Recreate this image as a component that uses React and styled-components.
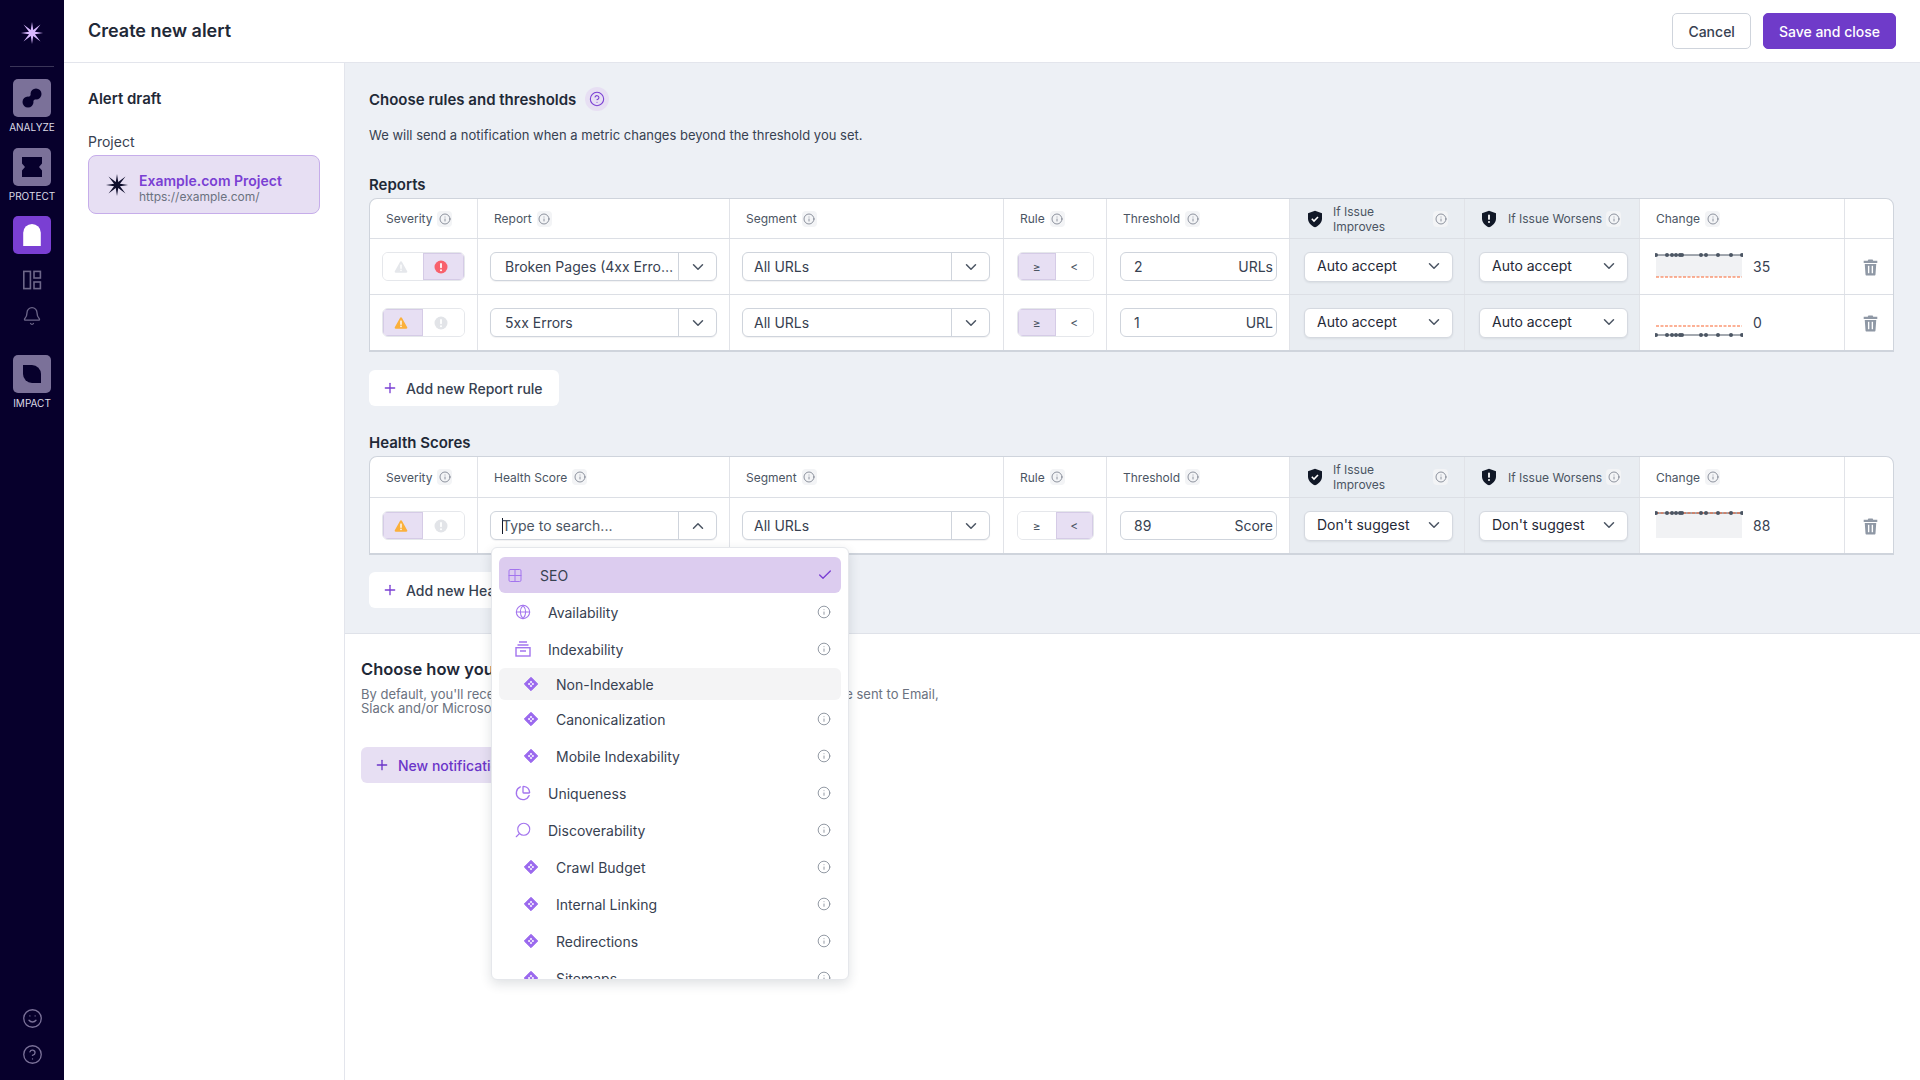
import styled, { createGlobalStyle } from "styled-components";
import {
  Bell,
  Check,
  ChevronDown,
  ChevronUp,
  CircleHelp,
  Globe,
  Grid2x2,
  Info,
  PieChart,
  Plus,
  Search,
  Smile,
} from "lucide-react";

const GlobalStyle = createGlobalStyle`
  * { box-sizing: border-box; }
  html, body { margin: 0; padding: 0; height: 100%; }
  body {
    font-family: Inter, "Liberation Sans", sans-serif;
    color: #1f2937;
    background: #ffffff;
  }
`;

const COLUMNS = "108px 252px 274px 103px 183px 175px 175px 205px 48px";

const Page = styled.div`
  display: flex;
  width: 100%;
  height: 100vh;
  overflow: hidden;
`;

const Sidebar = styled.aside`
  width: 64px;
  flex-shrink: 0;
  background: #07002c;
  display: flex;
  flex-direction: column;
  align-items: center;
`;

const SideLogo = styled.div`
  height: 67px;
  width: 44px;
  display: flex;
  align-items: center;
  justify-content: center;
  border-bottom: 1px solid #3a3558;
  padding-bottom: 1px;
`;

const SideGroup = styled.div`
  display: flex;
  flex-direction: column;
  align-items: center;
  margin-top: ${(p) => p.$top || 0}px;
`;

const SideTile = styled.div`
  width: 38px;
  height: 38px;
  border-radius: 5px;
  background: ${(p) => (p.$active ? "#7a3fd3" : "#7b7199")};
  display: flex;
  align-items: center;
  justify-content: center;
`;

const SideLabel = styled.span`
  font-size: 10px;
  line-height: 12px;
  margin-top: 4px;
  color: #dcdae6;
`;

const SideIcon = styled.div`
  height: 20px;
  display: flex;
  align-items: center;
  justify-content: center;
  color: #6d6689;
  margin-top: ${(p) => p.$top || 0}px;
`;

const SideBottom = styled.div`
  margin-top: auto;
  padding-bottom: 15px;
  display: flex;
  flex-direction: column;
  align-items: center;
  gap: 15px;
  color: #7b7199;
`;

const Content = styled.div`
  flex: 1;
  min-width: 0;
  display: flex;
  flex-direction: column;
`;

const Header = styled.header`
  height: 63px;
  flex-shrink: 0;
  border-bottom: 1px solid #e3e5ec;
  padding: 0 24px 1px;
  display: flex;
  align-items: center;
  justify-content: space-between;
`;

const PageTitle = styled.h1`
  margin: 0;
  font-size: 18px;
  font-weight: 600;
  color: #1f2937;
`;

const HeaderActions = styled.div`
  display: flex;
  gap: 12px;
  margin-top: 1px;
`;

const Button = styled.button`
  height: 36px;
  padding: 0 15px;
  font-family: inherit;
  font-size: 14px;
  font-weight: 500;
  border-radius: 5px;
  cursor: pointer;
  border: 1px solid ${(p) => (p.$primary ? "#6f3bc9" : "#cfd4dc")};
  background: ${(p) => (p.$primary ? "#6f3bc9" : "#ffffff")};
  color: ${(p) => (p.$primary ? "#ffffff" : "#374151")};
`;

const Body = styled.div`
  flex: 1;
  min-height: 0;
  display: flex;
`;

const LeftPanel = styled.div`
  width: 281px;
  flex-shrink: 0;
  border-right: 1px solid #e3e5ec;
  padding: 26px 24px 0;
`;

const PanelTitle = styled.div`
  font-size: 15px;
  font-weight: 600;
  line-height: 20px;
  color: #1f2937;
`;

const FieldLabel = styled.div`
  font-size: 14px;
  line-height: 18px;
  margin-top: 24px;
  margin-bottom: 4px;
  color: #374151;
`;

const ProjectCard = styled.div`
  height: 59px;
  width: 232px;
  border-radius: 8px;
  background: #e7dff3;
  border: 1px solid #c6adea;
  display: flex;
  align-items: center;
  gap: 10px;
  padding-left: 16px;
`;

const ProjectText = styled.div`
  padding-top: 7px;
`;

const ProjectName = styled.div`
  font-size: 14px;
  font-weight: 600;
  line-height: 16px;
  color: #7a3fd3;
`;

const ProjectUrl = styled.div`
  font-size: 12px;
  line-height: 15px;
  color: #6b7280;
`;

const Main = styled.main`
  flex: 1;
  min-width: 0;
  display: flex;
  flex-direction: column;
`;

const Rules = styled.section`
  background: #edf0f5;
  padding: 24px 26px 25px 24px;
  border-bottom: 1px solid #dfe2e9;
`;

const TitleRow = styled.div`
  display: flex;
  align-items: center;
  gap: 9px;
  height: 24px;
`;

const SectionTitle = styled.h2`
  margin: 0;
  font-size: 15px;
  font-weight: 600;
  color: #1f2937;
`;

const HelpBadge = styled.span`
  width: 24px;
  height: 24px;
  border-radius: 50%;
  background: #e7dff3;
  color: #7a3fd3;
  display: flex;
  align-items: center;
  justify-content: center;
`;

const Description = styled.p`
  margin: 14px 0 0;
  font-size: 13px;
  line-height: 20px;
  color: #374151;
`;

const GroupTitle = styled.h3`
  margin: ${(p) => p.$top}px 0 3px;
  font-size: 15px;
  font-weight: 600;
  line-height: 20px;
  color: #1f2937;
`;

const Table = styled.div`
  width: 1525px;
  background: #ffffff;
  border: 1px solid #cfd4dc;
  border-bottom-width: 2px;
  border-radius: 8px 8px 0 0;
`;

const Row = styled.div`
  display: grid;
  grid-template-columns: ${COLUMNS};
  height: ${(p) => p.$height}px;
  border-bottom: ${(p) => (p.$last ? "none" : "1px solid #dcdfe5")};
`;

const Cell = styled.div`
  display: flex;
  align-items: center;
  min-width: 0;
  padding: 0 ${(p) => (p.$right === undefined ? 12 : p.$right)}px 0 ${(p) => (p.$left === undefined ? 12 : p.$left)}px;
  border-right: ${(p) => (p.$end ? "none" : "1px solid #e1e3e8")};
  background: ${(p) => (p.$shade ? "#e9edf2" : "transparent")};
  gap: ${(p) => p.$gap || 0}px;
`;

const HeadLabel = styled.span`
  font-size: 12px;
  line-height: 15px;
  color: #4b5563;
  flex: ${(p) => (p.$grow ? 1 : "none")};
`;

const InfoTile = styled.span`
  width: 15px;
  height: 16px;
  margin-left: ${(p) => (p.$ml === undefined ? 5 : p.$ml)}px;
  flex-shrink: 0;
  border-radius: 4px;
  background: #f3f4f6;
  color: #6b7280;
  display: inline-flex;
  align-items: center;
  justify-content: center;
`;

const Toggle = styled.div`
  display: flex;
  width: ${(p) => p.$width}px;
  height: 29px;
  border-radius: 6px;
  border: 1px solid #e5e7eb;
  overflow: hidden;
`;

const ToggleSide = styled.div`
  flex: 1;
  display: flex;
  align-items: center;
  justify-content: center;
  padding-right: ${(p) => p.$nudge || 0}px;
  font-size: 12px;
  color: #4b5563;
  background: ${(p) => (p.$on ? "#e7dff3" : "#ffffff")};
  box-shadow: ${(p) => (p.$on ? "inset 0 0 0 1px #d5cbe6" : "none")};
`;

const ComboBox = styled.div`
  position: relative;
  display: flex;
  width: 100%;
  height: 29px;
  background: #ffffff;
  border: 1px solid #cfd4dc;
  border-radius: 6px;
  box-shadow: 0 1px 1px rgba(31, 41, 55, 0.06);
`;

const ComboText = styled.span`
  flex: 1;
  min-width: 0;
  padding-left: ${(p) => p.$pad}px;
  padding-right: 2px;
  font-size: 14px;
  line-height: 27px;
  color: ${(p) => (p.$muted ? "#4b5563" : "#374151")};
  white-space: nowrap;
  overflow: hidden;
  text-overflow: ellipsis;
`;

const Caret = styled.span`
  display: inline-block;
  width: 1px;
  height: 16px;
  margin-right: -1px;
  vertical-align: -3px;
  background: #111827;
`;

const ComboArrow = styled.span`
  width: 38px;
  flex-shrink: 0;
  border-left: 1px solid #cfd4dc;
  display: flex;
  align-items: center;
  justify-content: center;
  color: #4b5563;
`;

const ThresholdBox = styled.div`
  width: 100%;
  height: 29px;
  display: flex;
  align-items: center;
  justify-content: space-between;
  padding: 0 3px 0 13px;
  background: #ffffff;
  border: 1px solid #cfd4dc;
  border-radius: 6px;
  font-size: 14px;
  color: #374151;
`;

const ActionSelect = styled.div`
  width: 100%;
  height: 30px;
  display: flex;
  align-items: center;
  justify-content: space-between;
  padding: 0 9px 2px 12px;
  background: #ffffff;
  border: 1px solid #d5d9e0;
  border-radius: 6px;
  box-shadow: 0 1px 2px rgba(31, 41, 55, 0.08);
  font-size: 14px;
  color: #1f2937;
`;

const ChangeValue = styled.span`
  margin-left: 10px;
  font-size: 14px;
  color: #374151;
`;

const BinWrap = styled.span`
  display: flex;
  margin-top: 2px;
`;

const AddButton = styled.button`
  display: flex;
  align-items: center;
  gap: 8px;
  height: 36px;
  margin-top: ${(p) => p.$top}px;
  padding: 0 16px 0 13px;
  border: none;
  border-radius: 6px;
  background: #ffffff;
  font-family: inherit;
  font-size: 14px;
  font-weight: 500;
  color: #374151;
  white-space: nowrap;
  svg { color: #7a3fd3; flex-shrink: 0; }
`;

const Notify = styled.section`
  flex: 1;
  background: #ffffff;
  padding: 25px 16px 0;
`;

const NotifyTitle = styled.h2`
  margin: 0;
  font-size: 16.5px;
  font-weight: 600;
  line-height: 20px;
  color: #1f2937;
`;

const NotifyText = styled.p`
  margin: 8px 0 0;
  font-size: 13px;
  line-height: 14px;
  color: #6b7280;
  white-space: nowrap;
`;

const NotifyButton = styled.button`
  display: flex;
  align-items: center;
  gap: 8px;
  height: 36px;
  margin-top: 32px;
  padding: 0 14px 0 13px;
  border: none;
  border-radius: 6px;
  background: #e7dff3;
  font-family: inherit;
  font-size: 14px;
  font-weight: 500;
  color: #6b35c9;
`;

const Dropdown = styled.div`
  position: absolute;
  top: calc(100% + 8px);
  left: 0;
  z-index: 10;
  width: 358px;
  height: 433px;
  padding: 9px 7px 0;
  overflow: hidden;
  background: #ffffff;
  border: 1px solid #e5e7eb;
  border-radius: 6px;
  box-shadow: 0 4px 12px rgba(31, 41, 55, 0.14);
  display: flex;
  flex-direction: column;
  gap: 1px;
`;

const DropItem = styled.div`
  flex-shrink: 0;
  display: flex;
  align-items: center;
  height: ${(p) => (p.$hover ? 32 : 36)}px;
  padding: 0 10px 0 ${(p) => p.$pad}px;
  border-radius: 6px;
  background: ${(p) => (p.$selected ? "#dcccef" : p.$hover ? "#f4f4f5" : "transparent")};
  font-size: 14px;
  color: #374151;
`;

const DropIcon = styled.span`
  width: 16px;
  height: 16px;
  margin: 0 17px 0 1px;
  flex-shrink: 0;
  color: #a374ee;
  display: flex;
  align-items: center;
  justify-content: center;
`;

const DropLabel = styled.span`
  flex: 1;
`;

const DropInfo = styled.span`
  color: #7b8390;
  display: flex;
  margin-right: 0;
`;

const DropCheck = styled.span`
  color: #7a3fd3;
  display: flex;
  margin-right: -2px;
`;

const FlipIcon = styled.span`
  display: flex;
  transform: scaleX(-1);
`;

const starPoints = (outer, inner) => {
  const pts = [];
  for (let i = 0; i < 16; i++) {
    const r = i % 2 === 0 ? (i % 4 === 0 ? outer * 0.92 : outer) : inner;
    const a = (Math.PI * i) / 8 - Math.PI / 2;
    pts.push(`${(12 + r * Math.cos(a)).toFixed(2)},${(12 + r * Math.sin(a)).toFixed(2)}`);
  }
  return pts.join(" ");
};

const Star = ({ size, color }) => (
  <svg width={size} height={size} viewBox="0 0 24 24">
    <polygon points={starPoints(12, 3.2)} fill={color} />
  </svg>
);

const InfoMark = () => (
  <InfoTile>
    <Info size={12} strokeWidth={1.5} />
  </InfoTile>
);

const Triangle = ({ color }) => (
  <svg width="14" height="14" viewBox="0 0 14 14">
    <path d="M7 1.2c.4 0 .7.2.9.5l5.3 9.6c.4.7-.1 1.5-.9 1.5H1.7c-.8 0-1.3-.8-.9-1.5l5.3-9.6c.2-.3.5-.5.9-.5z" fill={color} />
    <rect x="6.3" y="4.6" width="1.4" height="4.2" fill="#fff" />
    <rect x="6.3" y="9.7" width="1.4" height="1.4" fill="#fff" />
  </svg>
);

const Alert = ({ color }) => (
  <svg width="14" height="14" viewBox="0 0 14 14">
    <circle cx="7" cy="7" r="6.5" fill={color} />
    <rect x="6.1" y="3" width="1.8" height="5.2" rx="0.9" fill="#fff" />
    <circle cx="7" cy="10.2" r="1" fill="#fff" />
  </svg>
);

const ShieldCheck = () => (
  <svg width="16" height="18" viewBox="0 0 16 18">
    <path d="M8 .8l7 2.4v5.2c0 4-2.9 7.2-7 8.8-4.1-1.6-7-4.8-7-8.8V3.2z" fill="#111827" />
    <path d="M4.8 8.8l2.2 2.2 4-4" fill="none" stroke="#fff" strokeWidth="1.6" />
  </svg>
);

const ShieldAlert = () => (
  <svg width="16" height="18" viewBox="0 0 16 18">
    <path d="M8 .8l7 2.4v5.2c0 4-2.9 7.2-7 8.8-4.1-1.6-7-4.8-7-8.8V3.2z" fill="#111827" />
    <rect x="7.1" y="4.6" width="1.8" height="5.2" rx="0.9" fill="#fff" />
    <circle cx="8" cy="12" r="1" fill="#fff" />
  </svg>
);

const Bin = () => (
  <svg width="15" height="17" viewBox="0 0 14 16">
    <path d="M5 0.5h4l.6 1.2H13.4v2H.6v-2h3.8z" fill="#8f98a5" />
    <path d="M1.6 4.6h10.8l-.7 10c0 .5-.4.9-.9.9H3.2c-.5 0-.9-.4-.9-.9z" fill="#8f98a5" />
    <rect x="4.6" y="6.4" width="1.3" height="7" fill="#fff" />
    <rect x="8.1" y="6.4" width="1.3" height="7" fill="#fff" />
  </svg>
);

const Diamond = () => (
  <svg width="16" height="16" viewBox="0 0 16 16">
    <path d="M8 1.3L14.7 8 8 14.7 1.3 8z" fill="#9a68ee" stroke="#9a68ee" strokeWidth="1" strokeLinejoin="round" />
    <rect x="7.1" y="5.2" width="1.8" height="1.8" transform="rotate(45 8 6.1)" fill="#fff" />
    <rect x="7.1" y="9" width="1.8" height="1.8" transform="rotate(45 8 9.9)" fill="#fff" />
    <rect x="5.2" y="7.1" width="1.8" height="1.8" transform="rotate(45 6.1 8)" fill="#fff" />
    <rect x="9" y="7.1" width="1.8" height="1.8" transform="rotate(45 9.9 8)" fill="#fff" />
  </svg>
);

const Archive = () => (
  <svg width="16" height="16" viewBox="0 0 16 16" fill="none" stroke="currentColor" strokeWidth="1.4">
    <path d="M4 1h8M2.5 4h11" />
    <rect x="1" y="6.7" width="14" height="8.3" />
    <path d="M5 10h6" />
  </svg>
);

const PanelGrid = () => (
  <svg width="20" height="20" viewBox="0 0 20 20" fill="none" stroke="currentColor" strokeWidth="1.6">
    <rect x="1.8" y="1.4" width="6.6" height="17.2" />
    <rect x="12" y="1.4" width="6.4" height="6.6" />
    <rect x="12" y="12" width="6.4" height="6.6" />
  </svg>
);

const dots = [1, 12, 17, 21, 25, 27, 46, 51, 63, 76, 87];

const Spark = ({ line, dash, area }) => (
  <svg width="88" height="55" viewBox="0 0 88 55">
    {area && <rect x="1" y={line} width="86" height={area} fill="#f1f2f4" />}
    <line x1="0" x2="88" y1={line} y2={line} stroke="#4b5563" strokeWidth="1.2" />
    <line x1="1" x2="87" y1={dash} y2={dash} stroke="#f9652f" strokeWidth="1.2" strokeDasharray="3 1.5" />
    {dots.map((x) => (
      <circle key={x} cx={x} cy={line} r="2" fill="#4b5563" />
    ))}
  </svg>
);

const TableHead = ({ second, height }) => (
  <Row $height={height}>
    <Cell $left={16}><HeadLabel>Severity</HeadLabel><InfoMark /></Cell>
    <Cell $left={16}><HeadLabel>{second}</HeadLabel><InfoMark /></Cell>
    <Cell $left={16}><HeadLabel>Segment</HeadLabel><InfoMark /></Cell>
    <Cell $left={16}><HeadLabel>Rule</HeadLabel><InfoMark /></Cell>
    <Cell $left={16}><HeadLabel>Threshold</HeadLabel><InfoMark /></Cell>
    <Cell $shade $left={17} $right={16} $gap={10}>
      <ShieldCheck />
      <HeadLabel $grow>If Issue<br />Improves</HeadLabel>
      <InfoMark />
    </Cell>
    <Cell $shade $left={16} $right={14} $gap={11}>
      <ShieldAlert />
      <HeadLabel>If Issue Worsens</HeadLabel>
      <InfoTile $ml={-7}><Info size={12} strokeWidth={1.5} /></InfoTile>
    </Cell>
    <Cell $left={16}><HeadLabel>Change</HeadLabel><InfoMark /></Cell>
    <Cell $end />
  </Row>
);

const RuleRow = ({ level, name, open, lessThan, threshold, unit, action, spark, change, last, height = 56 }) => (
  <Row $last={last} $height={height}>
    <Cell>
      <Toggle $width={83}>
        <ToggleSide $nudge={4} $on={level === "warn"}><Triangle color={level === "warn" ? "#fbb03b" : "#e5e7eb"} /></ToggleSide>
        <ToggleSide $nudge={5} $on={level === "error"}><Alert color={level === "error" ? "#f8616c" : "#e2e4e8"} /></ToggleSide>
      </Toggle>
    </Cell>
    <Cell>
      <ComboBox>
        {open ? (
          <ComboText $pad={11} $muted><Caret />Type to search...</ComboText>
        ) : (
          <ComboText $pad={14}>{name}</ComboText>
        )}
        <ComboArrow>
          {open ? <ChevronUp size={18} /> : <ChevronDown size={18} />}
        </ComboArrow>
        {open && <HealthMenu />}
      </ComboBox>
    </Cell>
    <Cell $right={13}>
      <ComboBox>
        <ComboText $pad={11}>All URLs</ComboText>
        <ComboArrow><ChevronDown size={18} /></ComboArrow>
      </ComboBox>
    </Cell>
    <Cell $left={13}>
      <Toggle $width={78}>
        <ToggleSide $on={!lessThan}>≥</ToggleSide>
        <ToggleSide $on={lessThan}>&lt;</ToggleSide>
      </Toggle>
    </Cell>
    <Cell $left={13}>
      <ThresholdBox>
        <span>{threshold}</span>
        <span>{unit}</span>
      </ThresholdBox>
    </Cell>
    <Cell $shade $left={14} $right={11}>
      <ActionSelect>{action}<ChevronDown size={18} color="#4b5563" /></ActionSelect>
    </Cell>
    <Cell $shade $left={14} $right={11}>
      <ActionSelect>{action}<ChevronDown size={18} color="#4b5563" /></ActionSelect>
    </Cell>
    <Cell $left={15}>
      <Spark {...spark} />
      <ChangeValue>{change}</ChangeValue>
    </Cell>
    <Cell $end $left={18} $right={0}><BinWrap><Bin /></BinWrap></Cell>
  </Row>
);

const menuItems = [
  { label: "SEO", pad: 7, icon: <Grid2x2 size={17} strokeWidth={1.5} />, selected: true },
  { label: "Availability", pad: 15, icon: <Globe size={16} strokeWidth={1.6} /> },
  { label: "Indexability", pad: 15, icon: <Archive /> },
  { label: "Non-Indexable", pad: 23, icon: <Diamond />, hover: true },
  { label: "Canonicalization", pad: 23, icon: <Diamond /> },
  { label: "Mobile Indexability", pad: 23, icon: <Diamond /> },
  { label: "Uniqueness", pad: 15, icon: <PieChart size={16} strokeWidth={2} /> },
  { label: "Discoverability", pad: 15, icon: <FlipIcon><Search size={18} strokeWidth={1.5} /></FlipIcon> },
  { label: "Crawl Budget", pad: 23, icon: <Diamond /> },
  { label: "Internal Linking", pad: 23, icon: <Diamond /> },
  { label: "Redirections", pad: 23, icon: <Diamond /> },
  { label: "Sitemaps", pad: 23, icon: <Diamond /> },
];

function HealthMenu() {
  return (
    <Dropdown>
      {menuItems.map((item) => (
        <DropItem key={item.label} $pad={item.pad} $selected={item.selected} $hover={item.hover}>
          <DropIcon>{item.icon}</DropIcon>
          <DropLabel>{item.label}</DropLabel>
          {item.selected && <DropCheck><Check size={16} /></DropCheck>}
          {!item.selected && !item.hover && <DropInfo><Info size={14} strokeWidth={1.4} /></DropInfo>}
        </DropItem>
      ))}
    </Dropdown>
  );
}

export default function App() {
  return (
    <Page>
      <GlobalStyle />
      <Sidebar>
        <SideLogo><Star size={24} color="#d9b8ff" /></SideLogo>
        <SideGroup $top={12}>
          <SideTile>
            <svg width="22" height="22" viewBox="0 0 22 22" fill="#07002c">
              <circle cx="7" cy="15" r="5.5" />
              <circle cx="15" cy="7" r="5.5" />
              <path d="M7 15L15 7" stroke="#07002c" strokeWidth="6" />
            </svg>
          </SideTile>
          <SideLabel>ANALYZE</SideLabel>
        </SideGroup>
        <SideGroup $top={15}>
          <SideTile>
            <svg width="22" height="22" viewBox="0 0 22 22">
              <path d="M1 1h20v6.5l-3 3.500 3 3.500V21H1v-6.500L4 11 1 7.500z" fill="#07002c" />
            </svg>
          </SideTile>
          <SideLabel>PROTECT</SideLabel>
        </SideGroup>
        <SideGroup $top={14}>
          <SideTile $active>
            <svg width="18" height="22" viewBox="0 0 16 20">
              <path d="M0 20V8a8 8 0 0 1 16 0v12z" fill="#ffffff" />
            </svg>
          </SideTile>
        </SideGroup>
        <SideIcon $top={16}><PanelGrid /></SideIcon>
        <SideIcon $top={16}><Bell size={20} strokeWidth={1.6} /></SideIcon>
        <SideGroup $top={29}>
          <SideTile>
            <svg width="20" height="20" viewBox="0 0 20 20">
              <path d="M1 1h9a9 9 0 0 1 9 9v9h-9a9 9 0 0 1-9-9z" fill="#07002c" />
            </svg>
          </SideTile>
          <SideLabel>IMPACT</SideLabel>
        </SideGroup>
        <SideBottom>
          <Smile size={21} strokeWidth={1.5} />
          <CircleHelp size={21} strokeWidth={1.5} />
        </SideBottom>
      </Sidebar>

      <Content>
        <Header>
          <PageTitle>Create new alert</PageTitle>
          <HeaderActions>
            <Button>Cancel</Button>
            <Button $primary>Save and close</Button>
          </HeaderActions>
        </Header>
        <Body>
          <LeftPanel>
            <PanelTitle>Alert draft</PanelTitle>
            <FieldLabel>Project</FieldLabel>
            <ProjectCard>
              <Star size={24} color="#0d0d2b" />
              <ProjectText>
                <ProjectName>Example.com Project</ProjectName>
                <ProjectUrl>https://example.com/</ProjectUrl>
              </ProjectText>
            </ProjectCard>
          </LeftPanel>
          <Main>
            <Rules>
              <TitleRow>
                <SectionTitle>Choose rules and thresholds</SectionTitle>
                <HelpBadge><CircleHelp size={16} strokeWidth={1.6} /></HelpBadge>
              </TitleRow>
              <Description>We will send a notification when a metric changes beyond the threshold you set.</Description>

              <GroupTitle $top={30}>Reports</GroupTitle>
              <Table>
                <TableHead second="Report" height={40} />
                <RuleRow
                  level="error"
                  name="Broken Pages (4xx Errors)"
                  threshold="2"
                  unit="URLs"
                  action="Auto accept"
                  spark={{ line: 16, dash: 38, area: 22 }}
                  change="35"
                />
                <RuleRow
                  level="warn"
                  name="5xx Errors"
                  threshold="1"
                  unit="URL"
                  action="Auto accept"
                  spark={{ line: 40, dash: 31 }}
                  change="0"
                  height={55}
                  last
                />
              </Table>
              <AddButton $top={18}><Plus size={16} />Add new Report rule</AddButton>

              <GroupTitle $top={27}>Health Scores</GroupTitle>
              <Table>
                <TableHead second="Health Score" height={41} />
                <RuleRow
                  level="warn"
                  open
                  lessThan
                  threshold="89"
                  unit="Score"
                  action="Don't suggest"
                  spark={{ line: 15, dash: 15, area: 25 }}
                  change="88"
                  height={55}
                  last
                />
              </Table>
              <AddButton $top={17}><Plus size={16} />Add new Health Score rule</AddButton>
            </Rules>
            <Notify>
              <NotifyTitle>Choose how you want to be notified</NotifyTitle>
              <NotifyText>
                By default, you'll receive email for each triggered alert. Notifications can also be sent to Email,
                <br />
                Slack and/or Microsoft Teams.
              </NotifyText>
              <NotifyButton><Plus size={16} />New notification channel</NotifyButton>
            </Notify>
          </Main>
        </Body>
      </Content>
    </Page>
  );
}
